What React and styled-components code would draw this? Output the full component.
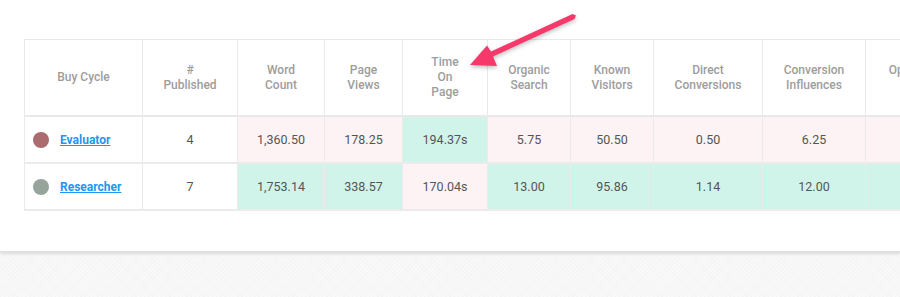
import React from 'react';
import styled, { createGlobalStyle } from 'styled-components';

const GlobalStyle = createGlobalStyle`
  html, body {
    margin: 0;
    padding: 0;
    background: #f8f8f8;
    font-family: Roboto, "Noto Sans", Arial, sans-serif;
  }
`;

const Page = styled.div`
  width: 900px;
  height: 297px;
  overflow: hidden;
  display: flex;
  flex-direction: column;
`;

const Card = styled.section`
  position: relative;
  background: #fff;
  padding: 39px 0 40px 24px;
  overflow: hidden;
  box-shadow: 0 2px 3px rgba(0, 0, 0, 0.12);
  border-bottom: 1px solid #e0e0e0;
`;

const Backdrop = styled.div`
  flex: 1;
  margin-top: 4px;
  background-color: #f9f9f9;
  background-image: repeating-linear-gradient(45deg, rgba(0, 0, 0, 0.01) 0 1px, transparent 1px 3px),
    repeating-linear-gradient(-45deg, rgba(0, 0, 0, 0.01) 0 1px, transparent 1px 3px);
`;

const Table = styled.table`
  border-collapse: collapse;
  table-layout: fixed;
  width: 951px;
  border-left: 1px solid #e6e6e6;
  border-bottom: 2px solid #e6e6e6;
`;

const HeadCell = styled.th`
  height: 75px;
  padding: 0 6px;
  border: 1px solid #e9e9e9;
  border-bottom-width: 2px;
  color: #9d9d9d;
  font-size: 12px;
  font-weight: 500;
  line-height: 15px;
  text-align: center;
  vertical-align: middle;
`;

const Cell = styled.td`
  height: 45px;
  padding: 0 6px;
  border: 1px solid #ebebeb;
  border-bottom-width: 2px;
  background: ${({ tone }) => (tone === 'up' ? '#d1f4ea' : tone === 'down' ? '#fdf3f4' : '#fff')};
  color: #555;
  font-size: 12.5px;
  text-align: center;
  vertical-align: middle;
`;

const CycleCell = styled(Cell)`
  text-align: left;
  padding-left: 8px;
`;

const Cycle = styled.div`
  display: flex;
  align-items: center;
  gap: 11px;
`;

const Dot = styled.span`
  width: 16px;
  height: 16px;
  border-radius: 50%;
  background: ${({ color }) => color};
  flex-shrink: 0;
`;

const CycleLink = styled.a`
  color: #2196f3;
  font-weight: 700;
  font-size: 12px;
  text-decoration: underline;
  cursor: pointer;
`;

const Arrow = styled.svg`
  position: absolute;
  left: 460px;
  top: 8px;
  overflow: visible;
  filter: drop-shadow(0 2px 2px rgba(0, 0, 0, 0.25));
`;

const columns = [
  { label: ['Buy Cycle'], width: 118 },
  { label: ['#', 'Published'], width: 95 },
  { label: ['Word', 'Count'], width: 87 },
  { label: ['Page', 'Views'], width: 78 },
  { label: ['Time', 'On', 'Page'], width: 85 },
  { label: ['Organic', 'Search'], width: 83 },
  { label: ['Known', 'Visitors'], width: 83 },
  { label: ['Direct', 'Conversions'], width: 109 },
  { label: ['Conversion', 'Influences'], width: 103 },
  { label: ['Opportunity', 'Value'], width: 110 },
];

const rows = [
  {
    name: 'Evaluator',
    color: '#ab6b6f',
    published: 4,
    values: [
      ['1,360.50', 'down'],
      ['178.25', 'down'],
      ['194.37s', 'up'],
      ['5.75', 'down'],
      ['50.50', 'down'],
      ['0.50', 'down'],
      ['6.25', 'down'],
      ['', 'down'],
    ],
  },
  {
    name: 'Researcher',
    color: '#97a49c',
    published: 7,
    values: [
      ['1,753.14', 'up'],
      ['338.57', 'up'],
      ['170.04s', 'down'],
      ['13.00', 'up'],
      ['95.86', 'up'],
      ['1.14', 'up'],
      ['12.00', 'up'],
      ['', 'up'],
    ],
  },
];

const PointerArrow = () => (
  <Arrow width="130" height="70" viewBox="0 0 130 70">
    <path d="M116 7.5 L114.5 11 L33 48.5 L37 58 L10 57 L27 37.5 L31 43.5 L112.5 6 Z" fill="#f7386a" />
  </Arrow>
);

const App = () => (
  <Page>
    <GlobalStyle />
    <Card>
      <Table>
        <colgroup>
          {columns.map((c) => (
            <col key={c.label.join(' ')} style={{ width: c.width }} />
          ))}
        </colgroup>
        <thead>
          <tr>
            {columns.map((c) => (
              <HeadCell key={c.label.join(' ')}>
                {c.label.map((line, i) => (
                  <React.Fragment key={line}>
                    {i > 0 && <br />}
                    {line}
                  </React.Fragment>
                ))}
              </HeadCell>
            ))}
          </tr>
        </thead>
        <tbody>
          {rows.map((r) => (
            <tr key={r.name}>
              <CycleCell>
                <Cycle>
                  <Dot color={r.color} />
                  <CycleLink>{r.name}</CycleLink>
                </Cycle>
              </CycleCell>
              <Cell>{r.published}</Cell>
              {r.values.map(([v, tone], i) => (
                <Cell key={i} tone={tone}>
                  {v}
                </Cell>
              ))}
            </tr>
          ))}
        </tbody>
      </Table>
      <PointerArrow />
    </Card>
    <Backdrop />
  </Page>
);

export default App;
